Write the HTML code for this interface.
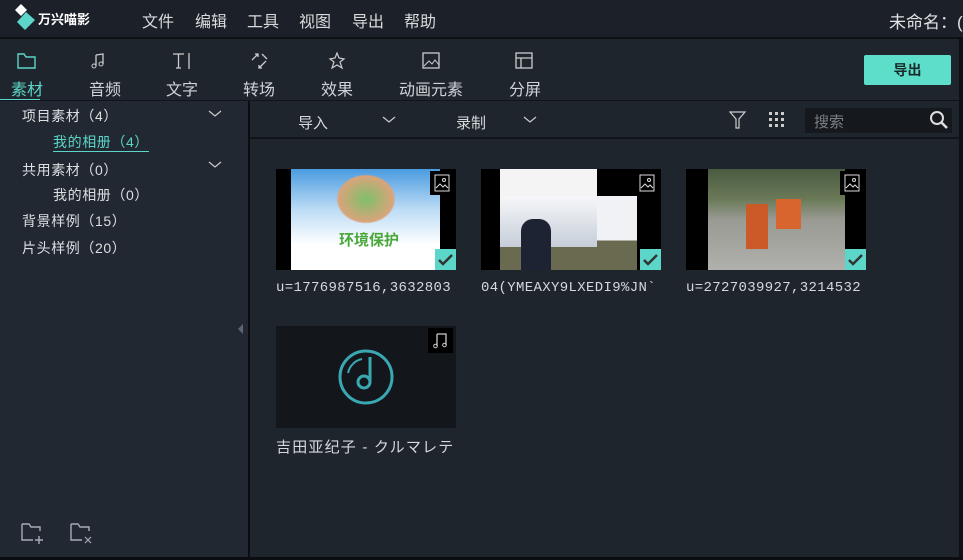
<!DOCTYPE html>
<html><head><meta charset="utf-8"><style>
*{margin:0;padding:0;box-sizing:border-box}
body{width:963px;height:560px;background:#1f252d;font-family:"Liberation Sans","Noto Sans CJK SC",sans-serif;color:#d6d9dc;position:relative;overflow:hidden;font-size:15px}
.a{position:absolute}
.top{left:0;top:0;width:963px;height:37px;background:#1c2129}
.menu span{position:absolute;top:8px;font-size:16px;color:#d8dadc}
.tb{left:0;top:39px;width:963px;height:61px;background:#1f252d}
.tab{position:absolute;top:76px;font-size:16px;color:#d0d3d6;width:80px;text-align:center}
.ic{position:absolute;top:52px}
.left{left:0;top:101px;width:248px;height:456px;background:#222831}
.ltxt{position:absolute;font-size:14px;color:#dcdfe2;letter-spacing:0.6px}
.card{position:absolute;width:180px;height:101px;background:#000}
.badge{position:absolute;right:2px;top:2px;width:24px;height:24px;background:#000}
.chk{position:absolute;right:0;bottom:0;width:21px;height:21px;background:#5cd6c8}
.lbl{position:absolute;font-family:"Liberation Mono","Noto Sans CJK JP",monospace;font-size:14px;color:#d6d9dc;letter-spacing:0.35px}
</style></head><body>
<div class="a top"></div>
<div class="a" style="left:0;top:37px;width:963px;height:2px;background:#0e1114"></div>
<svg class="a" style="left:15px;top:4px" width="22" height="26"><polygon points="6,0 12,6 6,12 0,6" fill="#fff"/><polygon points="11,8 20,16 10,26 2,18" fill="#5cd6c8"/></svg>
<div class="a" style="left:38px;top:9px;font-size:13px;font-weight:bold;color:#fff">万兴喵影</div>
<div class="menu"><span style="left:142px">文件</span><span style="left:195px">编辑</span><span style="left:247px">工具</span><span style="left:299px">视图</span><span style="left:352px">导出</span><span style="left:404px">帮助</span></div>
<div class="a" style="left:889px;top:8px;font-size:17px;color:#e0e2e4;white-space:nowrap">未命名：(</div>
<div class="a tb"></div>
<div class="a" style="left:959px;top:39px;width:4px;height:521px;background:#0e1114"></div>
<svg class="ic" style="left:17px" width="20" height="18"><path d="M1 2h6l2 3h9v11H1z" fill="none" stroke="#5cd6c8" stroke-width="1.4"/></svg>
<svg class="ic" style="left:90px" width="20" height="18"><path d="M6 3v11M6 3l7-1v10" fill="none" stroke="#ccc" stroke-width="1.3"/><circle cx="4" cy="14" r="2" fill="none" stroke="#ccc"/><circle cx="11" cy="12" r="2" fill="none" stroke="#ccc"/></svg>
<svg class="ic" style="left:172px" width="20" height="18"><path d="M1 2h11M6.5 2v14M4 16h5M17 1v16" fill="none" stroke="#ccc" stroke-width="1.3"/></svg>
<svg class="ic" style="left:250px" width="20" height="18"><path d="M2 8l6-6M5 2h3v3M16 9l-7 7M9 13v3h3M12 2l5 5" fill="none" stroke="#ccc" stroke-width="1.3"/></svg>
<svg class="ic" style="left:328px" width="20" height="18"><path d="M9 1l2 5 5 1-4 3 2 6-5-3-5 3 2-6-4-3 5-1z" fill="none" stroke="#ccc" stroke-width="1.2"/></svg>
<svg class="ic" style="left:422px" width="20" height="18"><rect x="1" y="1" width="16" height="15" fill="none" stroke="#ccc" stroke-width="1.3"/><path d="M2 14l5-5 3 3 3-4 4 5" fill="none" stroke="#ccc"/></svg>
<svg class="ic" style="left:515px" width="20" height="18"><rect x="1" y="1" width="16" height="15" fill="none" stroke="#ccc" stroke-width="1.3"/><path d="M1 6h16M6 6v10" fill="none" stroke="#ccc" stroke-width="1.3"/></svg>
<div class="tab" style="left:-13px;color:#5cd6c8">素材</div>
<div class="tab" style="left:65px">音频</div>
<div class="tab" style="left:142px">文字</div>
<div class="tab" style="left:219px">转场</div>
<div class="tab" style="left:297px">效果</div>
<div class="tab" style="left:391px">动画元素</div>
<div class="tab" style="left:485px">分屏</div>
<div class="a" style="left:0;top:99px;width:40px;height:2px;background:#5cd6c8"></div>
<div class="a" style="left:864px;top:55px;width:87px;height:30px;background:#5cdecb;border-radius:2px;color:#1a2a2a;font-weight:bold;font-size:14px;text-align:center;line-height:30px">导出</div>
<div class="a" style="left:0;top:100px;width:963px;height:1px;background:#111418"></div>
<div class="a left"></div>
<div class="a" style="left:248px;top:101px;width:2px;height:456px;background:#0b0d10"></div>
<div class="ltxt" style="left:22px;top:106px">项目素材（4）</div>
<div class="ltxt" style="left:53px;top:134px;color:#5cd6c8;border-bottom:1px solid #5cd6c8;line-height:17px">我的相册（4）</div>
<div class="ltxt" style="left:22px;top:160px">共用素材（0）</div>
<div class="ltxt" style="left:53px;top:185px">我的相册（0）</div>
<div class="ltxt" style="left:22px;top:211px">背景样例（15）</div>
<div class="ltxt" style="left:22px;top:238px">片头样例（20）</div>
<svg class="a" style="left:208px;top:109px" width="14" height="10"><path d="M1 2l6 5 6-5" fill="none" stroke="#ccc" stroke-width="1.2"/></svg>
<svg class="a" style="left:208px;top:160px" width="14" height="10"><path d="M1 2l6 5 6-5" fill="none" stroke="#ccc" stroke-width="1.2"/></svg>
<svg class="a" style="left:238px;top:324px" width="6" height="10"><polygon points="5,0 0,5 5,10" fill="#5a6676"/></svg>
<svg class="a" style="left:21px;top:523px" width="26" height="22"><path d="M1 1h7l2 3h9v4M1 1v16h11" fill="none" stroke="#aab" stroke-width="1.4"/><path d="M18 13v8M14 17h8" stroke="#aab" stroke-width="1.4"/></svg>
<svg class="a" style="left:70px;top:523px" width="26" height="22"><path d="M1 1h7l2 3h9v4M1 1v16h11" fill="none" stroke="#aab" stroke-width="1.4"/><path d="M15 14l6 6M21 14l-6 6" stroke="#aab" stroke-width="1.2"/></svg>
<div class="a" style="left:0;top:557px;width:963px;height:3px;background:#0b0d10"></div>
<div class="a" style="left:298px;top:112px;font-size:15px">导入</div>
<div class="a" style="left:456px;top:112px;font-size:15px">录制</div>
<svg class="a" style="left:382px;top:115px" width="14" height="10"><path d="M1 2l6 5 6-5" fill="none" stroke="#ccc" stroke-width="1.2"/></svg>
<svg class="a" style="left:523px;top:115px" width="14" height="10"><path d="M1 2l6 5 6-5" fill="none" stroke="#ccc" stroke-width="1.2"/></svg>
<svg class="a" style="left:729px;top:111px" width="18" height="18"><path d="M1 1h15l-6 7v9h-3V8z" fill="none" stroke="#ccc" stroke-width="1.2"/></svg>
<svg class="a" style="left:769px;top:112px" width="18" height="18"><g fill="#ccc"><rect x="0" y="0" width="3" height="3"/><rect x="6" y="0" width="3" height="3"/><rect x="12" y="0" width="3" height="3"/><rect x="0" y="6" width="3" height="3"/><rect x="6" y="6" width="3" height="3"/><rect x="12" y="6" width="3" height="3"/><rect x="0" y="12" width="3" height="3"/><rect x="6" y="12" width="3" height="3"/><rect x="12" y="12" width="3" height="3"/></g></svg>
<div class="a" style="left:805px;top:108px;width:147px;height:25px;background:#15191e"></div>
<div class="a" style="left:814px;top:111px;font-size:15px;color:#7a8088">搜索</div>
<svg class="a" style="left:929px;top:110px" width="20" height="20"><circle cx="8" cy="8" r="6" fill="none" stroke="#ddd" stroke-width="2"/><path d="M12 12l6 6" stroke="#ddd" stroke-width="2.5"/></svg>
<div class="a" style="left:250px;top:137px;width:709px;height:2px;background:#111418"></div>
<div class="card" style="left:276px;top:169px">
 <div class="a" style="left:15px;top:0;width:149px;height:101px;background:linear-gradient(#4a9be0,#bcdcf5 40%,#fff 75%)"></div>
 <div class="a" style="left:60px;top:5px;width:60px;height:50px;border-radius:50%;background:radial-gradient(#7fbf6a,#d9a47a 65%,transparent 70%)"></div>
 <div class="a" style="left:63px;top:60px;font-size:15px;font-weight:bold;color:#4aa83a">环境保护</div>
 <div class="badge"><svg width="24" height="24"><rect x="5" y="4" width="14" height="16" fill="none" stroke="#ddd"/><path d="M6 17l4-4 3 3 2-2 3 3" fill="none" stroke="#ddd"/><circle cx="14" cy="9" r="1.5" fill="none" stroke="#ddd"/></svg></div>
 <div class="chk"><svg width="21" height="21"><path d="M4 11l4 4 9-9" fill="none" stroke="#333" stroke-width="2.5"/></svg></div>
</div>
<div class="card" style="left:481px;top:169px">
 <div class="a" style="left:19px;top:0;width:97px;height:27px;background:#f4f4f4"></div>
 <div class="a" style="left:19px;top:27px;width:97px;height:52px;background:linear-gradient(#f6f7f9,#c5cdd8)"></div>
 <div class="a" style="left:19px;top:78px;width:97px;height:23px;background:#6a6a50"></div>
 <div class="a" style="left:116px;top:27px;width:40px;height:74px;background:linear-gradient(#f0f2f5 60%,#6a6a50 60%)"></div>
 <div class="a" style="left:40px;top:50px;width:30px;height:51px;background:#1d2333;border-radius:12px 12px 0 0"></div>
 <div class="badge"><svg width="24" height="24"><rect x="5" y="4" width="14" height="16" fill="none" stroke="#ddd"/><path d="M6 17l4-4 3 3 2-2 3 3" fill="none" stroke="#ddd"/><circle cx="14" cy="9" r="1.5" fill="none" stroke="#ddd"/></svg></div>
 <div class="chk"><svg width="21" height="21"><path d="M4 11l4 4 9-9" fill="none" stroke="#333" stroke-width="2.5"/></svg></div>
</div>
<div class="card" style="left:686px;top:169px">
 <div class="a" style="left:22px;top:0;width:137px;height:101px;background:linear-gradient(#4a5a40,#6a7a58 30%,#9a9a94 50%,#b0b0ac)"></div>
 <div class="a" style="left:60px;top:35px;width:22px;height:45px;background:#cc5a28"></div>
 <div class="a" style="left:90px;top:30px;width:25px;height:30px;background:#d8642e"></div>
 <div class="badge"><svg width="24" height="24"><rect x="5" y="4" width="14" height="16" fill="none" stroke="#ddd"/><path d="M6 17l4-4 3 3 2-2 3 3" fill="none" stroke="#ddd"/><circle cx="14" cy="9" r="1.5" fill="none" stroke="#ddd"/></svg></div>
 <div class="chk"><svg width="21" height="21"><path d="M4 11l4 4 9-9" fill="none" stroke="#333" stroke-width="2.5"/></svg></div>
</div>
<div class="lbl" style="left:276px;top:280px">u=1776987516,3632803</div>
<div class="lbl" style="left:481px;top:280px">04(YMEAXY9LXEDI9%JN`</div>
<div class="lbl" style="left:686px;top:280px">u=2727039927,3214532</div>
<div class="card" style="left:276px;top:326px;height:102px;background:#13171b">
 <svg class="a" style="left:62px;top:23px" width="56" height="56"><circle cx="28" cy="28" r="26" fill="none" stroke="#3aa8b2" stroke-width="3"/><path d="M10 24a18 18 0 0 1 14-14" fill="none" stroke="#3aa8b2" stroke-width="2"/><path d="M32 8v25" stroke="#3aa8b2" stroke-width="3"/><circle cx="26" cy="33" r="6" fill="none" stroke="#3aa8b2" stroke-width="3"/></svg>
 <div class="badge" style="right:3px;top:2px;width:25px;height:25px"><svg width="25" height="25"><path d="M9 6h9v11M9 6v12" fill="none" stroke="#ccc" stroke-width="1.3"/><circle cx="7.5" cy="18" r="1.8" fill="none" stroke="#ccc"/><circle cx="16.5" cy="17" r="1.8" fill="none" stroke="#ccc"/></svg></div>
</div>
<div class="a" style="left:276px;top:436px;font-size:15px;color:#d6d9dc;letter-spacing:1.2px;font-family:'Liberation Sans','Noto Sans CJK JP',sans-serif;white-space:nowrap">吉田亚纪子 - クルマレテ</div>
</body></html>
